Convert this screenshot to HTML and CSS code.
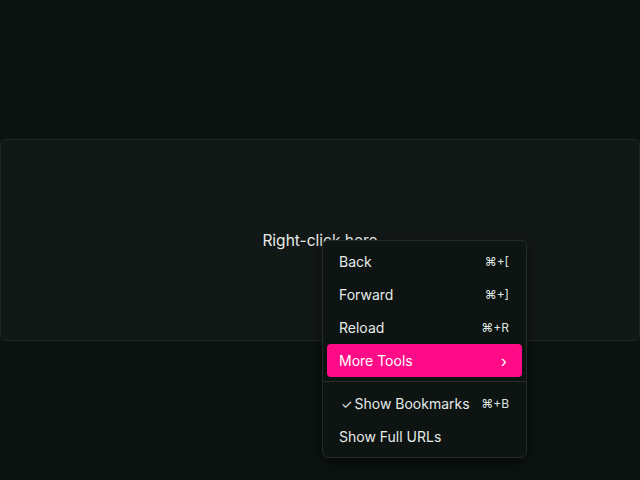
FILE: index.html
```html
<!DOCTYPE html>
<html>
<head>
<meta charset="utf-8">
<link rel="stylesheet" href="styles.css">
</head>
<body>
<div class="page">
  <div class="card">Right-click here</div>
  <div class="menu">
    <div class="item"><span>Back</span><span class="kbd">⌘+[</span></div>
    <div class="item"><span>Forward</span><span class="kbd">⌘+]</span></div>
    <div class="item"><span>Reload</span><span class="kbd">⌘+R</span></div>
    <div class="item active"><span>More Tools</span><span class="chev">›</span></div>
    <div class="sep"></div>
    <div class="item check"><span><span class="tick">✓</span>Show Bookmarks</span><span class="kbd">⌘+B</span></div>
    <div class="item"><span>Show Full URLs</span></div>
  </div>
</div>
</body>
</html>
```
FILE: styles.css
```css
html, body {
  margin: 0;
  padding: 0;
  background: #0b1210;
  width: 640px;
  height: 480px;
  overflow: hidden;
  font-family: Inter, "Noto Sans", sans-serif;
  color: #e6ebe8;
}
.page {
  position: relative;
  width: 640px;
  height: 480px;
  padding-top: 139px;
  box-sizing: border-box;
}
.card {
  height: 202px;
  box-sizing: border-box;
  border: 1px solid #1f2724;
  border-radius: 6px;
  background: #121816;
  display: flex;
  align-items: center;
  justify-content: center;
  font-size: 15.5px;
  padding-top: 1px;
  color: #e8ece9;
}
.menu {
  position: absolute;
  left: 322px;
  top: 240px;
  width: 205px;
  box-sizing: border-box;
  padding: 4px;
  background: #0d1412;
  border: 1px solid #242c29;
  border-radius: 6px;
  box-shadow: 0 4px 14px rgba(0,0,0,0.4);
  font-size: 14px;
}
.item {
  height: 33px;
  display: flex;
  align-items: center;
  justify-content: space-between;
  padding: 0 13px 0 12px;
  border-radius: 4px;
  color: #e6ebe8;
}
.item.active {
  background: #ff0a87;
  color: #fff;
}
.kbd {
  font-size: 12px;
  color: #dfe4e1;
}
.chev {
  font-size: 16px;
  margin-right: 2px;
}
.tick {
  font-size: 13px;
  margin-left: 2px;
  margin-right: 2px;
}
.check > span:first-child {
  margin-left: 0;
}
.sep {
  height: 1px;
  background: #262e2b;
  margin: 4px -4px 5px -4px;
}
```
